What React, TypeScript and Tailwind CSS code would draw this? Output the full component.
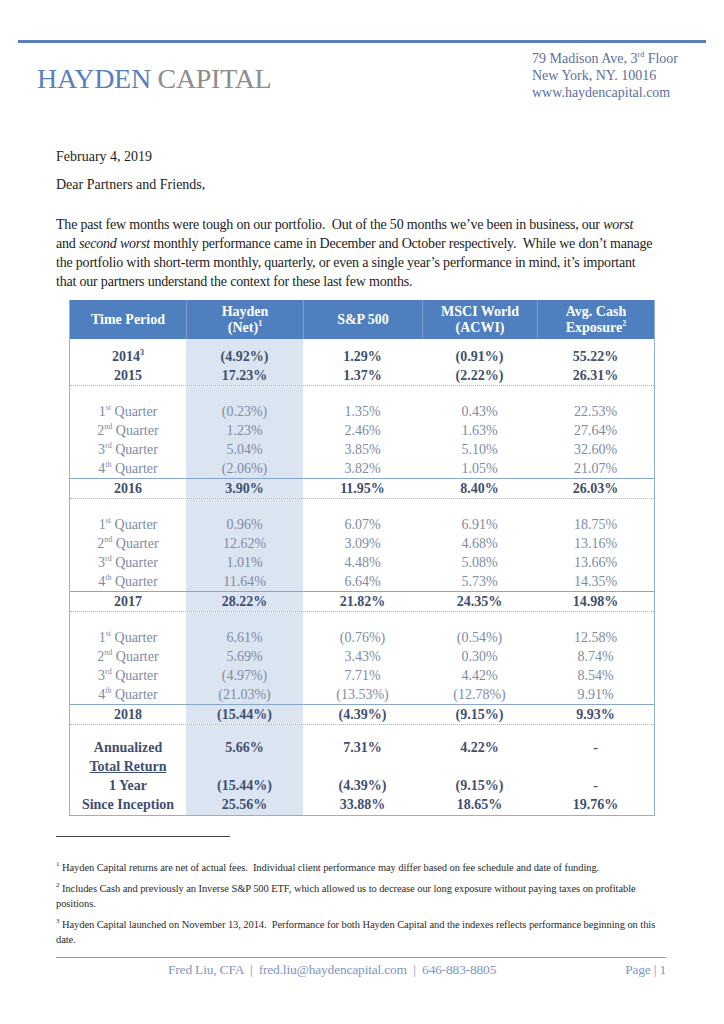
import React from "react";

type Row = { label: React.ReactNode; values: string[] };

const COLS = "grid grid-cols-[116px_117px_119px_115px_117px]";

const GROUPS: { quarters: string[][]; year: string; total: string[] }[] = [
    {
        quarters: [
            ["(0.23%)", "1.35%", "0.43%", "22.53%"],
            ["1.23%", "2.46%", "1.63%", "27.64%"],
            ["5.04%", "3.85%", "5.10%", "32.60%"],
            ["(2.06%)", "3.82%", "1.05%", "21.07%"],
        ],
        year: "2016",
        total: ["3.90%", "11.95%", "8.40%", "26.03%"],
    },
    {
        quarters: [
            ["0.96%", "6.07%", "6.91%", "18.75%"],
            ["12.62%", "3.09%", "4.68%", "13.16%"],
            ["1.01%", "4.48%", "5.08%", "13.66%"],
            ["11.64%", "6.64%", "5.73%", "14.35%"],
        ],
        year: "2017",
        total: ["28.22%", "21.82%", "24.35%", "14.98%"],
    },
    {
        quarters: [
            ["6.61%", "(0.76%)", "(0.54%)", "12.58%"],
            ["5.69%", "3.43%", "0.30%", "8.74%"],
            ["(4.97%)", "7.71%", "4.42%", "8.54%"],
            ["(21.03%)", "(13.53%)", "(12.78%)", "9.91%"],
        ],
        year: "2018",
        total: ["(15.44%)", "(4.39%)", "(9.15%)", "9.93%"],
    },
];

const ORD = ["st", "nd", "rd", "th"];

function TableRow({ row, bold, className = "" }: { row: Row; bold?: boolean; className?: string }) {
    const tone = bold ? "font-bold text-[#3f4f6f]" : "text-[#7e8ba4]";
    return (
        <div className={`${COLS} h-[19px] leading-[19px] text-[14px] ${tone} ${className}`}>
            <div className="text-center">{row.label}</div>
            {row.values.map((v, i) => (
                <div key={i} className={`text-center ${i === 0 ? "bg-[#dbe5f1]" : ""}`}>
                    {v}
                </div>
            ))}
        </div>
    );
}

function Spacer({ h, dotted }: { h: string; dotted?: boolean }) {
    return (
        <div className={`${COLS} ${h} ${dotted ? "border-t border-dotted border-[#9fb4d6]" : ""}`}>
            <div />
            <div className="bg-[#dbe5f1]" />
            <div />
            <div />
            <div />
        </div>
    );
}

function Sup({ children, size = "text-[8px]" }: { children: React.ReactNode; size?: string }) {
    return <sup className={`${size} leading-none -top-[0.7em]`}>{children}</sup>;
}

export default function App() {
    return (
        <div className="w-[724px] h-[1024px] bg-white font-['Liberation_Serif',serif] text-[#1c1c1c] overflow-hidden">
            {/* Letterhead */}
            <div className="px-[18px] pt-[40px]">
                <div className="h-[3px] bg-[#5a7fb9]" />
                <div className="flex justify-between mt-[7px]">
                    <div className="ml-[19px] mt-[12px] text-[28px] leading-[34px] tracking-[-0.3px]">
                        <span className="text-[#5a80bc]">HAYDEN</span>{" "}
                        <span className="text-[#8d8d8d]">CAPITAL</span>
                    </div>
                    <div className="mr-[28px] text-[14px] leading-[17px] text-[#5c6f9c] whitespace-nowrap">
                        <div>
                            79 Madison Ave, 3<Sup>rd</Sup> Floor
                        </div>
                        <div>New York, NY. 10016</div>
                        <div>www.haydencapital.com</div>
                    </div>
                </div>
            </div>

            {/* Letter body */}
            <div className="px-[56px] text-[14px] leading-[19px]">
                <p className="mt-[46px]">February 4, 2019</p>
                <p className="mt-[9px]">Dear Partners and Friends,</p>
                <p className="mt-[21px] whitespace-nowrap tracking-[-0.2px]">
                    The past few months were tough on our portfolio.{"\u00a0 "}Out of the 50 months we’ve been in
                    business, our <i>worst</i>
                    <br />
                    and <i>second worst</i> monthly performance came in December and October respectively.
                    {"\u00a0 "}While we don’t manage
                    <br />
                    the portfolio with short-term monthly, quarterly, or even a single year’s performance in mind,
                    it’s important
                    <br />
                    that our partners understand the context for these last few months.
                </p>

                {/* Performance table */}
                <div className="mt-[9px] ml-[13px] w-[586px] border-x border-b border-[#93afd6]">
                    <div className={`${COLS} h-[39px] bg-[#4f7fbf] text-white font-bold text-[14px] leading-[16px]`}>
                        <div className="flex items-center justify-center">Time Period</div>
                        <div className="flex items-center justify-center border-l border-[#7fa0cf]">
                            <div className="text-center">
                                Hayden
                                <br />
                                (Net)<Sup>1</Sup>
                            </div>
                        </div>
                        <div className="flex items-center justify-center border-l border-[#7fa0cf]">S&amp;P 500</div>
                        <div className="flex items-center justify-center border-l border-[#7fa0cf]">
                            <div className="text-center">
                                MSCI World
                                <br />
                                (ACWI)
                            </div>
                        </div>
                        <div className="flex items-center justify-center border-l border-[#7fa0cf]">
                            <div className="text-center">
                                Avg. Cash
                                <br />
                                Exposure<Sup>2</Sup>
                            </div>
                        </div>
                    </div>

                    <Spacer h="h-[8px]" />
                    <TableRow
                        bold
                        row={{
                            label: (
                                <>
                                    2014<Sup>3</Sup>
                                </>
                            ),
                            values: ["(4.92%)", "1.29%", "(0.91%)", "55.22%"],
                        }}
                    />
                    <TableRow bold row={{ label: "2015", values: ["17.23%", "1.37%", "(2.22%)", "26.31%"] }} />

                    {GROUPS.map((g) => (
                        <React.Fragment key={g.year}>
                            <Spacer h="h-[17px]" dotted />
                            {g.quarters.map((q, i) => (
                                <TableRow
                                    key={i}
                                    row={{
                                        label: (
                                            <>
                                                {i + 1}
                                                <Sup>{ORD[i]}</Sup> Quarter
                                            </>
                                        ),
                                        values: q,
                                    }}
                                />
                            ))}
                            <TableRow
                                bold
                                className="border-t border-[#8aa6cf] h-[20px]"
                                row={{ label: g.year, values: g.total }}
                            />
                        </React.Fragment>
                    ))}

                    <Spacer h="h-[14px]" dotted />
                    <TableRow bold row={{ label: "Annualized", values: ["5.66%", "7.31%", "4.22%", "-"] }} />
                    <TableRow
                        bold
                        row={{ label: <span className="underline">Total Return</span>, values: ["", "", "", ""] }}
                    />
                    <TableRow bold row={{ label: "1 Year", values: ["(15.44%)", "(4.39%)", "(9.15%)", "-"] }} />
                    <TableRow
                        bold
                        row={{ label: "Since Inception", values: ["25.56%", "33.88%", "18.65%", "19.76%"] }}
                    />
                    <Spacer h="h-[1px]" />
                </div>

                {/* Footnotes */}
                <div className="mt-[20px] w-[174px] h-px bg-[#444]" />
                <div className="mt-[23px] whitespace-nowrap text-[10.5px] leading-[15px] tracking-[-0.08px] text-[#2a2a2a] flex flex-col gap-[6px]">
                    <p>
                        <Sup size="text-[7px]">1</Sup> Hayden Capital returns are net of actual fees.{"\u00a0 "}
                        Individual client performance may differ based on fee schedule and date of funding.
                    </p>
                    <p>
                        <Sup size="text-[7px]">2</Sup> Includes Cash and previously an Inverse S&amp;P 500 ETF, which
                        allowed us to decrease our long exposure without paying taxes on profitable
                        <br />
                        positions.
                    </p>
                    <p>
                        <Sup size="text-[7px]">3</Sup> Hayden Capital launched on November 13, 2014.{"\u00a0 "}
                        Performance for both Hayden Capital and the indexes reflects performance beginning on this
                        <br />
                        date.
                    </p>
                </div>

                {/* Footer */}
                <div className="mt-[10px] mr-[2px] h-px bg-[#9a9a9a]" />
                <div className="mt-[3px] flex justify-between text-[13.5px] leading-[18px] tracking-[-0.2px] text-[#8196c3]">
                    <span className="ml-[112px] whitespace-pre">
                        Fred Liu, CFA  |  fred.liu@haydencapital.com  |  646-883-8805
                    </span>
                    <span className="mr-[2px] whitespace-pre">Page | 1</span>
                </div>
            </div>
        </div>
    );
}
